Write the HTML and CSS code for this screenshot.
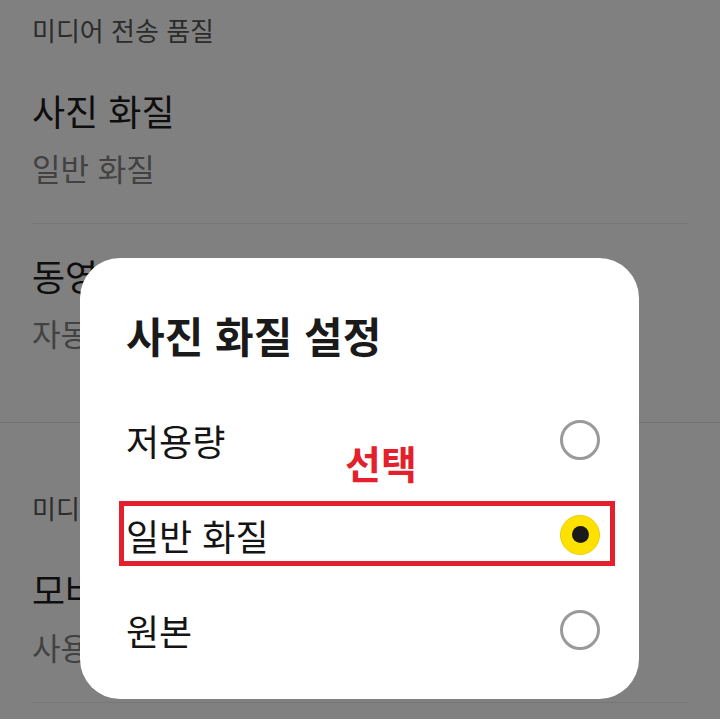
FILE: index.html
```html
<!DOCTYPE html>
<html lang="ko">
<head>
<meta charset="utf-8">
<title>사진 화질 설정</title>
<link rel="stylesheet" href="styles.css">
</head>
<body>
<main class="settings">
  <section class="group group-first">
    <h2 class="group-title">미디어 전송 품질</h2>
    <div class="item item-divided">
      <div class="item-title">사진 화질</div>
      <div class="item-sub">일반 화질</div>
    </div>
    <div class="item">
      <div class="item-title">동영상 화질</div>
      <div class="item-sub">자동 화질</div>
    </div>
  </section>
  <section class="group group-second">
    <h2 class="group-title">미디어 자동 다운로드</h2>
    <div class="item item-divided">
      <div class="item-title">모바일 데이터</div>
      <div class="item-sub">사용 안 함</div>
    </div>
  </section>
</main>

<div class="dialog" role="dialog" aria-label="사진 화질 설정">
  <h1 class="dialog-title">사진 화질 설정</h1>
  <span class="note">선택</span>
  <ul class="options">
    <li class="option">
      <span class="option-label">저용량</span>
      <span class="radio"></span>
    </li>
    <li class="option option-marked">
      <span class="option-label">일반 화질</span>
      <span class="radio radio-on"></span>
    </li>
    <li class="option">
      <span class="option-label">원본</span>
      <span class="radio"></span>
    </li>
  </ul>
</div>
</body>
</html>
```
FILE: styles.css
```css
* { box-sizing: border-box; }

html, body {
  margin: 0;
  padding: 0;
}

body {
  width: 720px;
  height: 719px;
  overflow: hidden;
  background: #808080;
  font-family: "Noto Sans CJK KR", "Noto Sans", sans-serif;
  position: relative;
}

.settings {
  display: flex;
  flex-direction: column;
}

.group {
  display: flex;
  flex-direction: column;
}

.group-first {
  padding-bottom: 34px;
  border-bottom: 1px solid #727272;
}

.group-second {
  padding-top: 55px;
}

.group-title {
  margin: 0;
  padding: 0 32px;
  font-size: 26px;
  font-weight: 400;
  line-height: 59px;
  height: 59px;
  color: #2c2c2c;
  white-space: nowrap;
}

.group-second .group-title {
  line-height: 60px;
  height: 60px;
}

.item {
  margin: 0 32px;
  padding: 22px 0 26px;
  display: flex;
  flex-direction: column;
}

.item-divided {
  border-bottom: 1px solid #777777;
}

.item-title {
  font-size: 36px;
  line-height: 58px;
  color: #0e0e0e;
  white-space: nowrap;
}

.item-sub {
  font-size: 31px;
  line-height: 58px;
  color: #424242;
  white-space: nowrap;
}

/* dialog overlay */
.dialog {
  position: absolute;
  left: 80px;
  top: 258px;
  width: 559px;
  height: 441px;
  background: #ffffff;
  border-radius: 40px;
  padding: 47px 39px 22px 46px;
  display: flex;
  flex-direction: column;
}

.dialog-title {
  margin: 0 0 27px;
  font-size: 42px;
  font-weight: 700;
  line-height: 60px;
  height: 60px;
  color: #1a1a1a;
  white-space: nowrap;
}

.note {
  position: absolute;
  left: 265px;
  top: 184px;
  font-size: 39px;
  font-weight: 700;
  line-height: 40px;
  color: #e3202c;
  white-space: nowrap;
}

.options {
  list-style: none;
  margin: 0;
  padding: 0;
  display: flex;
  flex-direction: column;
}

.option {
  height: 95px;
  display: flex;
  align-items: center;
  justify-content: space-between;
  position: relative;
}

.option-label {
  font-size: 36px;
  line-height: 40px;
  color: #141414;
  white-space: nowrap;
}

.option-marked::after {
  content: "";
  position: absolute;
  left: -7px;
  right: -15px;
  top: 14px;
  bottom: 16px;
  border: 5px solid #e3202c;
}

.radio {
  width: 40px;
  height: 40px;
  border-radius: 50%;
  border: 3px solid #9a9a9a;
  display: flex;
  align-items: center;
  justify-content: center;
  flex: none;
}

.radio-on {
  border: 1px solid #e8cf00;
  background: #ffe100;
}

.radio-on::before {
  content: "";
  width: 17px;
  height: 17px;
  border-radius: 50%;
  background: #1a1a1a;
}
```
